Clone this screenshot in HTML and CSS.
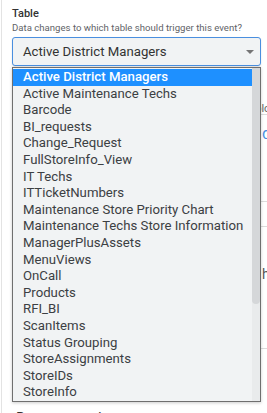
FILE: index.html
```html
<!DOCTYPE html>
<html>
<head>
<meta charset="utf-8">
<link rel="stylesheet" href="styles.css">
</head>
<body>
<div class="panel">
  <div class="field">
    <div class="label">Table</div>
    <div class="help">Data changes to which table should trigger this event?</div>
    <div class="select-wrap">
      <div class="select">
        <span class="select-text">Active District Managers</span>
        <svg class="caret" width="8" height="4" viewBox="0 0 8 4"><path d="M0 0H8L4 4Z" fill="#757575"/></svg>
      </div>
      <div class="menu">
        <div class="list">
          <div class="opt sel">Active District Managers</div>
          <div class="opt">Active Maintenance Techs</div>
          <div class="opt">Barcode</div>
          <div class="opt">BI_requests</div>
          <div class="opt">Change_Request</div>
          <div class="opt">FullStoreInfo_View</div>
          <div class="opt">IT Techs</div>
          <div class="opt">ITTicketNumbers</div>
          <div class="opt">Maintenance Store Priority Chart</div>
          <div class="opt">Maintenance Techs Store Information</div>
          <div class="opt">ManagerPlusAssets</div>
          <div class="opt">MenuViews</div>
          <div class="opt">OnCall</div>
          <div class="opt">Products</div>
          <div class="opt">RFI_BI</div>
          <div class="opt">ScanItems</div>
          <div class="opt">Status Grouping</div>
          <div class="opt">StoreAssignments</div>
          <div class="opt">StoreIDs</div>
          <div class="opt">StoreInfo</div>
        </div>
        <div class="scrollbar"><div class="thumb"></div></div>
      </div>
    </div>
  </div>
  <div class="behind">
    <div class="b-row b1"><span class="b-text">Color</span></div>
    <div class="b-row b2"><span class="b-link">d</span></div>
    <div class="b-row b3"></div>
    <div class="b-row b4"><span class="b-text">h</span></div>
    <div class="b-row b5"></div>
  </div>
  <div class="doc">Documentation</div>
</div>
</body>
</html>
```

FILE: styles.css
```css
html, body {
  margin: 0;
  padding: 0;
  background: #ffffff;
}
body {
  width: 267px;
  height: 413px;
  overflow: hidden;
  font-family: Roboto, "Liberation Sans", sans-serif;
  color: #3c4043;
}
.panel {
  margin-left: 1px;
  border-left: 1px solid #e3e3e3;
  padding: 7px 0 0 10px;
  height: 413px;
  box-sizing: border-box;
  overflow: hidden;
}
.label {
  font-size: 11px;
  font-weight: 500;
  color: #333;
  line-height: 13px;
}
.help {
  font-size: 9.6px;
  color: #5f6368;
  line-height: 12px;
  margin-top: 2px;
  white-space: nowrap;
}
.select-wrap {
  position: relative;
  margin-top: 3px;
  width: 249px;
}
.select {
  height: 29px;
  box-sizing: border-box;
  border: 1px solid #4a8fdf;
  border-radius: 3px;
  background: #f1f3f4;
  display: flex;
  align-items: center;
  justify-content: space-between;
  padding: 0 6px 0 10px;
  box-shadow: 0 1px 2px rgba(0,0,0,0.12);
}
.select-text {
  font-size: 13.2px;
  color: #333;
}
.caret {
  margin-top: 1px;
}
.menu {
  position: absolute;
  left: 0;
  top: 30px;
  width: 249px;
  height: 335px;
  box-sizing: border-box;
  border: 1px solid #6f6f6f;
  background: #f1f3f4;
  display: flex;
  box-shadow: 0 1px 3px rgba(0,0,0,0.2);
  z-index: 5;
}
.list {
  flex: 1;
  padding-top: 1px;
}
.opt {
  height: 16.6px;
  line-height: 16.6px;
  font-size: 13.2px;
  padding-left: 10px;
  color: #3c4043;
  white-space: nowrap;
}
.opt.sel {
  background: #1e90ff;
  color: #fff;
  font-weight: 500;
}
.scrollbar {
  width: 8px;
  background: #e9ebec;
}
.thumb {
  height: 236px;
  background: #d5d7d9;
  border-radius: 0 0 4px 4px;
}
.behind {
  width: 256px;
}
.b-row {
  box-sizing: border-box;
  border-bottom: 1px solid #dcdcdc;
  white-space: nowrap;
  overflow: hidden;
}
.b1 { height: 49px; padding: 37px 0 0 236px; line-height: 12px; font-size: 11px; color: #666; }
.b2 { height: 87px; padding: 10px 0 0 250px; line-height: 18px; font-size: 16px; }
.b-link { color: #4a8fdf; }
.b3 { height: 25px; }
.b4 { height: 122px; padding: 39px 0 0 250px; line-height: 16px; font-size: 14px; color: #555; }
.b5 { height: 52px; border-bottom: none; }
.doc {
  margin-top: 8px;
  font-size: 15px;
  line-height: 18px;
  color: #333;
  padding-left: 4px;
}
```
